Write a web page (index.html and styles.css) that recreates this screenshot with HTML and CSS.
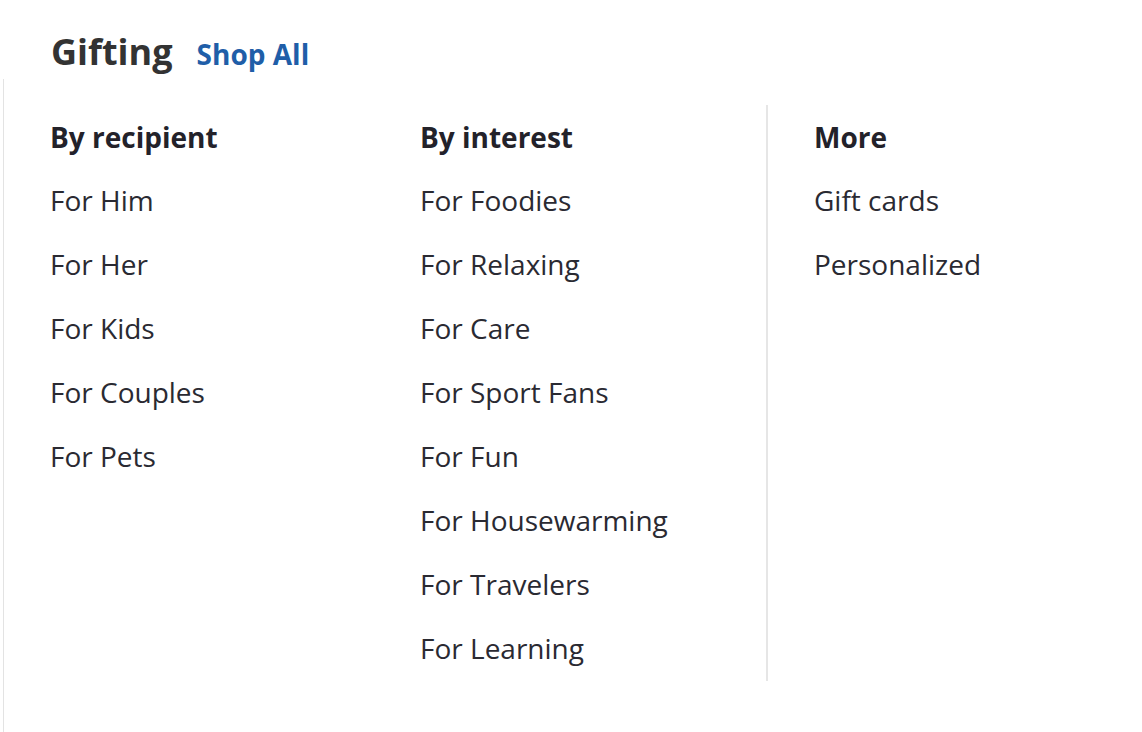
FILE: index.html
```html
<!DOCTYPE html>
<html lang="en">
<head>
<meta charset="utf-8">
<title>Gifting</title>
<link rel="stylesheet" href="styles.css">
</head>
<body>
<div class="menu">
  <div class="menu-head">
    <h2 class="menu-title">Gifting</h2>
    <a class="shop-all" href="#">Shop All</a>
  </div>
  <div class="panel">
    <div class="col col-recipient">
      <h3 class="col-title">By recipient</h3>
      <ul class="links">
        <li><a href="#">For Him</a></li>
        <li><a href="#">For Her</a></li>
        <li><a href="#">For Kids</a></li>
        <li><a href="#">For Couples</a></li>
        <li><a href="#">For Pets</a></li>
      </ul>
    </div>
    <div class="col col-interest">
      <h3 class="col-title">By interest</h3>
      <ul class="links">
        <li><a href="#">For Foodies</a></li>
        <li><a href="#">For Relaxing</a></li>
        <li><a href="#">For Care</a></li>
        <li><a href="#">For Sport Fans</a></li>
        <li><a href="#">For Fun</a></li>
        <li><a href="#">For Housewarming</a></li>
        <li><a href="#">For Travelers</a></li>
        <li><a href="#">For Learning</a></li>
      </ul>
    </div>
    <div class="col col-more">
      <h3 class="col-title">More</h3>
      <ul class="links">
        <li><a href="#">Gift cards</a></li>
        <li><a href="#">Personalized</a></li>
      </ul>
    </div>
  </div>
</div>
</body>
</html>
```

FILE: styles.css
```css
html, body {
  margin: 0;
  padding: 0;
  background: #fff;
}
body {
  font-family: "Open Sans", "Liberation Sans", sans-serif;
  color: #2a2a32;
}
.menu {
  width: 1142px;
  height: 732px;
  overflow: hidden;
}
.menu-head {
  display: flex;
  align-items: baseline;
  gap: 24px;
  padding: 28px 0 0 51px;
  height: 79px;
  box-sizing: border-box;
}
.menu-title {
  margin: 0;
  font-size: 36px;
  line-height: 48px;
  font-weight: 700;
  color: #333;
}
.shop-all {
  font-size: 28px;
  font-weight: 700;
  color: #1f5ea8;
  text-decoration: none;
}
.panel {
  margin-left: 3px;
  border-left: 1px solid #e3e3e3;
  display: flex;
  align-items: flex-start;
  padding-top: 26px;
  min-height: 653px;
}
.col {
  padding: 12px 0;
}
.col-recipient {
  width: 370px;
  padding-left: 46px;
  box-sizing: content-box;
}
.col-interest {
  width: 346px;
  border-right: 2px solid #e6e6e6;
}
.col-more {
  padding-left: 46px;
}
.col-title {
  margin: 0;
  font-size: 28px;
  line-height: 40px;
  font-weight: 700;
  color: #23222a;
}
.links {
  list-style: none;
  margin: -1px 0 0;
  padding: 0 0 1px;
}
.links li {
  margin-top: 24px;
  font-size: 28px;
  line-height: 40px;
}
.links a {
  font-size: 28px;
  color: #2a2a32;
  text-decoration: none;
}
```
